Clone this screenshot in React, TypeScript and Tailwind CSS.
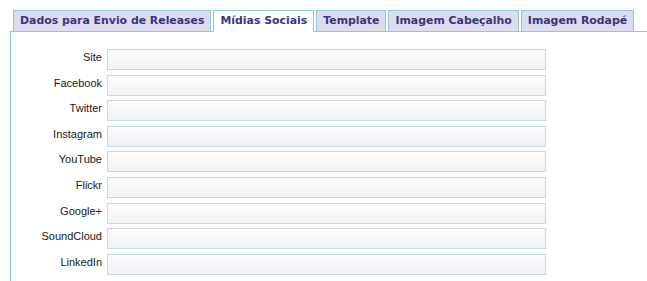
import React from "react";

const tabs = [
  { label: "Dados para Envio de Releases", active: false },
  { label: "Mídias Sociais", active: true },
  { label: "Template", active: false },
  { label: "Imagem Cabeçalho", active: false },
  { label: "Imagem Rodapé", active: false },
];

const fields = ["Site", "Facebook", "Twitter", "Instagram", "YouTube", "Flickr", "Google+", "SoundCloud", "LinkedIn"];

export default function App() {
  return (
    <div className="bg-white w-[647px] h-[281px] overflow-hidden pl-[10px] pt-[10px]">
      <div className="flex gap-[2px] pl-[3px] mb-[-1px] relative z-10">
        {tabs.map((t) => (
          <div
            key={t.label}
            className={
              t.active
                ? "h-[22px] px-[6px] flex items-center border border-[#8fc6e2] border-b-white bg-white text-[#363685] font-bold text-[10.9px] whitespace-nowrap"
                : "h-[22px] px-[6px] flex items-center border border-[#8fc6e2] bg-[#dcdcee] text-[#363685] font-bold text-[10.9px] whitespace-nowrap"
            }
            style={{ fontFamily: '"DejaVu Sans", Verdana, sans-serif' }}
          >
            {t.label}
          </div>
        ))}
      </div>
      <div className="border-l border-t border-[#8fc6e2] h-[260px] pt-[17px]">
        {fields.map((f) => (
          <div key={f} className="flex items-start h-[25.6px]">
            <div
              className="w-[91px] text-right text-[11px] leading-[13px] pt-[2px] text-[#1a1a1a]"
              style={{ fontFamily: '"Liberation Sans", Arial, sans-serif' }}
            >
              {f}
            </div>
            <input
              className="ml-[5px] w-[439px] h-[21px] border border-[#c4d8ee] bg-gradient-to-b from-[#fcfdfe] to-[#f0f2f6] outline-none"
              type="text"
            />
          </div>
        ))}
      </div>
    </div>
  );
}
